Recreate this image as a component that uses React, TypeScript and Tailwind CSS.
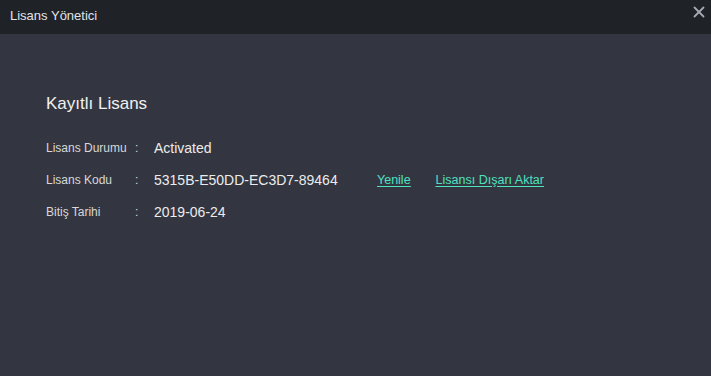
import { X } from 'lucide-react';

const rows = [
  { label: 'Lisans Durumu', value: 'Activated' },
  { label: 'Lisans Kodu', value: '5315B-E50DD-EC3D7-89464', links: true },
  { label: 'Bitiş Tarihi', value: '2019-06-24' },
];

const App = () => {
  return (
    <div
      className="w-[711px] h-[376px] flex flex-col bg-[#333640] text-[#e6e6e6]"
      style={{ fontFamily: '"Liberation Sans", Arial, sans-serif' }}
    >
      {/* Title bar */}
      <div className="h-[34px] flex items-center justify-between bg-[#1f2226] pl-[10px] pr-[3px]">
        <span className="text-[13px] text-[#e0e4ea] pb-[3px]">Lisans Yönetici</span>
        <X className="w-[18px] h-[18px] text-[#a4a8b2] mb-[10px]" strokeWidth={2.4} />
      </div>

      {/* Content */}
      <div className="pl-[46px] pt-[60px]">
        <h1 className="text-[17px] text-[#f0f0f0] leading-5">Kayıtlı Lisans</h1>
        <div className="mt-[23px] flex flex-col gap-[10px]">
          {rows.map((row) => (
            <div key={row.label} className="h-[22px] flex items-center">
              <span className="w-[89px] whitespace-nowrap text-[12px] text-[#d8d8d8]">{row.label}</span>
              <span className="w-[19px] text-[12px] text-[#d8d8d8]">:</span>
              <span className="w-[223px] whitespace-nowrap text-[14px] text-[#ececec]">{row.value}</span>
              {row.links && (
                <div className="flex items-center gap-[25px] text-[12.5px] text-[#4fe0c0] underline underline-offset-2">
                  <a>Yenile</a>
                  <a>Lisansı Dışarı Aktar</a>
                </div>
              )}
            </div>
          ))}
        </div>
      </div>
    </div>
  );
};

export default App;
